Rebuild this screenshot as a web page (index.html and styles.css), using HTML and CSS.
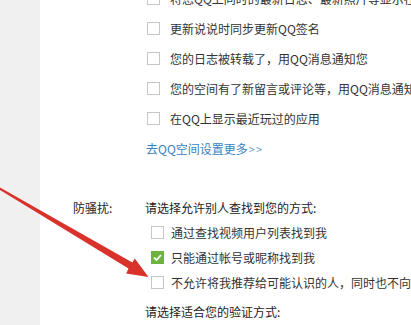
FILE: index.html
```html
<!DOCTYPE html>
<html lang="zh">
<head>
<meta charset="utf-8">
<link rel="stylesheet" href="styles.css">
</head>
<body>
<div class="page">
  <aside class="side"></aside>
  <main class="main">
    <div class="opts">
      <div class="row"><span class="cb"></span><span>将您QQ上同时的最新日志、最新照片等显示在QQ空间</span></div>
      <div class="row"><span class="cb"></span><span>更新说说时同步更新QQ签名</span></div>
      <div class="row"><span class="cb"></span><span>您的日志被转载了<span class="p">，</span>用QQ消息通知您</span></div>
      <div class="row"><span class="cb"></span><span>您的空间有了新留言或评论等<span class="p">，</span>用QQ消息通知您</span></div>
      <div class="row"><span class="cb"></span><span>在QQ上显示最近玩过的应用</span></div>
      <div class="row"><a class="link">去QQ空间设置更多<span class="gt">&gt;&gt;</span></a></div>
    </div>
    <div class="field">
      <div class="label">防骚扰:</div>
      <div class="content">
        <div class="head">请选择允许别人查找到您的方式:</div>
        <div class="row2"><span class="cb"></span><span>通过查找视频用户列表找到我</span></div>
        <div class="row2"><span class="cb checked"><svg width="13" height="13" viewBox="0 0 13 13"><path d="M3 6.6 L5.5 9 L10 4" fill="none" stroke="#fff" stroke-width="1.8"/></svg></span><span>只能通过帐号或昵称找到我</span></div>
        <div class="row2"><span class="cb"></span><span>不允许将我推荐给可能认识的人<span class="p">，</span>同时也不向我推荐可能认识的人</span></div>
        <div class="head head2">请选择适合您的验证方式:</div>
      </div>
    </div>
  </main>
</div>
<svg class="arrow" width="411" height="325" viewBox="0 0 411 325">
  <polygon points="0,187.5 0,190 128.5,268.6 126.2,273.6 148.5,277 134.8,258.6 132.4,262.6" fill="#d8322a"/>
</svg>
</body>
</html>
```

FILE: styles.css
```css
html, body {
  margin: 0;
  padding: 0;
  width: 411px;
  height: 325px;
  overflow: hidden;
  background: #fff;
  font-family: "Microsoft YaHei", "Noto Sans CJK SC", sans-serif;
  font-size: 12px;
  color: #333;
}
.page {
  display: flex;
  height: 325px;
}
.side {
  width: 40px;
  flex: none;
  background: #f0f0f0;
}
.main {
  flex: 1;
  background: #fff;
  white-space: nowrap;
  overflow: hidden;
}
.opts {
  margin-top: -17px;
  padding-left: 107px;
}
.row {
  height: 30px;
  display: flex;
  align-items: center;
  gap: 10px;
}
.p {
  font-family: "Noto Sans CJK TC", sans-serif;
}
.cb {
  width: 11px;
  height: 11px;
  border: 1px solid #c6c6c6;
  background: #fff;
  flex: none;
  display: inline-block;
}
.cb.checked {
  background: #6db33f;
  border-color: #6db33f;
  position: relative;
}
.cb.checked svg {
  position: absolute;
  left: -1px;
  top: -1px;
}
.link {
  color: #3a82bf;
  margin-left: -1px;
}
.gt {
  color: #6a9fcc;
  font-size: 11px;
  letter-spacing: 1px;
  margin-left: 1px;
}
.field {
  display: flex;
  margin-top: 33px;
  padding-left: 33px;
  color: #222;
}
.label {
  width: 72px;
  flex: none;
  line-height: 24px;
}
.head {
  line-height: 24px;
}
.head2 {
  margin-top: 5px;
}
.row2 {
  height: 25px;
  display: flex;
  align-items: center;
  gap: 7px;
  padding-left: 6px;
  color: #333;
}
.arrow {
  position: absolute;
  left: 0;
  top: 0;
  pointer-events: none;
}
```
